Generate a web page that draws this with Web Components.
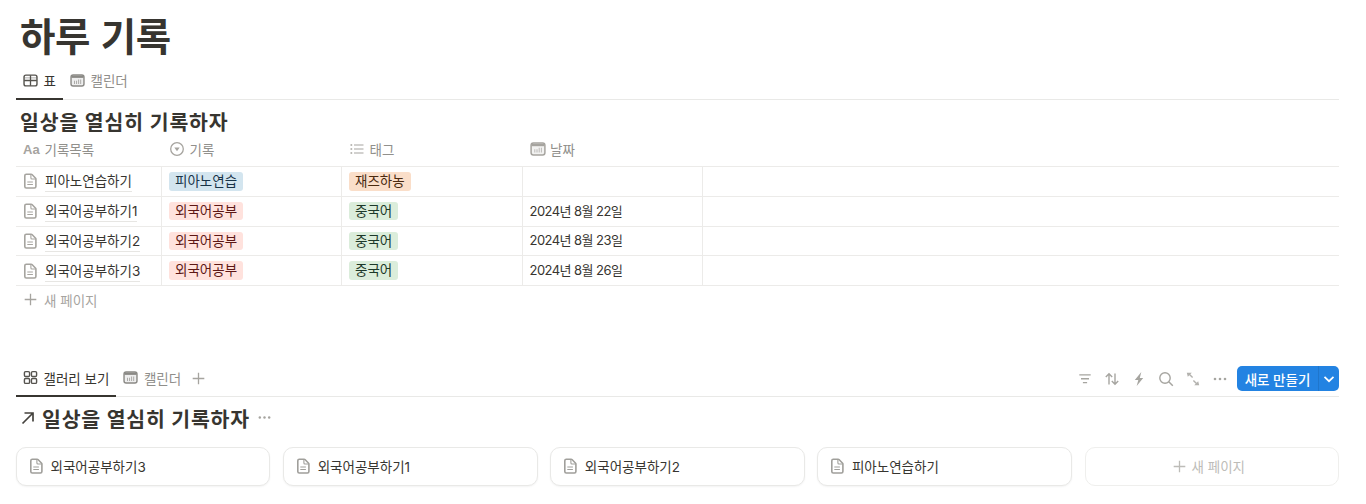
<!DOCTYPE html>
<html lang="ko"><head><meta charset="utf-8"><title>하루 기록</title>
<style>
html,body{margin:0;background:#fff;overflow:hidden}
body{font-family:Inter,"Noto Sans CJK KR","Noto Sans",sans-serif;color:#373530;width:1366px;height:504px}
</style></head><body>
<n-page>
  <n-title>하루 기록</n-title>
  <n-tabs style="--h:33px;--pb:5px">
    <n-tab icon="table" active style="--w:47px">표</n-tab>
    <n-tab icon="calendar">캘린더</n-tab>
  </n-tabs>
  <n-heading>일상을 열심히 기록하자</n-heading>
  <n-table>
    <n-row head>
      <n-cell head><n-aa slot="icon">Aa</n-aa>기록목록</n-cell>
      <n-cell head><n-icon slot="icon" name="select"></n-icon>기록</n-cell>
      <n-cell head><n-icon slot="icon" name="list"></n-icon>태그</n-cell>
      <n-cell head><n-icon slot="icon" name="calendar"></n-icon>날짜</n-cell>
      <n-cell filler></n-cell>
    </n-row>
    <n-row>
      <n-cell title><n-icon slot="icon" name="doc"></n-icon><n-link>피아노연습하기</n-link></n-cell>
      <n-cell><n-tag color="blue">피아노연습</n-tag></n-cell>
      <n-cell><n-tag color="orange">재즈하농</n-tag></n-cell>
      <n-cell></n-cell>
      <n-cell filler></n-cell>
    </n-row>
    <n-row>
      <n-cell title><n-icon slot="icon" name="doc"></n-icon><n-link>외국어공부하기1</n-link></n-cell>
      <n-cell><n-tag color="red">외국어공부</n-tag></n-cell>
      <n-cell><n-tag color="green">중국어</n-tag></n-cell>
      <n-cell date>2024년 8월 22일</n-cell>
      <n-cell filler></n-cell>
    </n-row>
    <n-row>
      <n-cell title><n-icon slot="icon" name="doc"></n-icon><n-link>외국어공부하기2</n-link></n-cell>
      <n-cell><n-tag color="red">외국어공부</n-tag></n-cell>
      <n-cell><n-tag color="green">중국어</n-tag></n-cell>
      <n-cell date>2024년 8월 23일</n-cell>
      <n-cell filler></n-cell>
    </n-row>
    <n-row>
      <n-cell title><n-icon slot="icon" name="doc"></n-icon><n-link>외국어공부하기3</n-link></n-cell>
      <n-cell><n-tag color="red">외국어공부</n-tag></n-cell>
      <n-cell><n-tag color="green">중국어</n-tag></n-cell>
      <n-cell date>2024년 8월 26일</n-cell>
      <n-cell filler></n-cell>
    </n-row>
  </n-table>
  <n-addrow>새 페이지</n-addrow>
  <n-tabs style="--h:35px;--pb:2px;margin-top:46px">
    <n-tab icon="gallery" active style="--w:100px">갤러리 보기</n-tab>
    <n-tab icon="calendar">캘린더</n-tab>
    <n-icon name="plus" style="--s:15px;margin-left:3px;color:#a6a49f"></n-icon>
    <n-toolbar slot="end"></n-toolbar>
  </n-tabs>
  <n-heading linked>일상을 열심히 기록하자</n-heading>
  <n-gallery>
    <n-card>외국어공부하기3</n-card>
    <n-card>외국어공부하기1</n-card>
    <n-card>외국어공부하기2</n-card>
    <n-card>피아노연습하기</n-card>
    <n-card add>새 페이지</n-card>
  </n-gallery>
</n-page>
<script>
const ICONS={
 doc:'<g fill="none" stroke="currentColor" stroke-linejoin="round"><path stroke-width="1.600" d="M4.300 1.200h4.900c.3 0 .6.100.8.300l3.600 3.700c.2.200.3.500.3.800v7.500c0 .9-.6 1.500-1.500 1.500H4.300c-.9 0-1.500-.6-1.500-1.500V2.700c0-.9.600-1.500 1.500-1.500z"/><path stroke-width="1.100" d="M8.900 1.500v3.500c0 .6.400 1 1 1h3.500M5.300 9h5.600M5.300 11.500h5.600"/></g>',
 table:'<g fill="none" stroke="currentColor"><rect x="1.100" y="2.300" width="13.800" height="11.400" rx="2" stroke-width="1.500"/><path stroke-width="1.400" d="M1.200 8h13.600M8 2.400v11.200"/><path stroke-width="1.100" d="M1.200 5.200h13.600" opacity=".45"/></g>',
 calendar:'<rect x="1.100" y="2.100" width="13.800" height="11.800" rx="2.200" fill="currentColor" opacity=".14"/><rect x="1.100" y="2.100" width="13.800" height="11.800" rx="2.200" fill="none" stroke="currentColor" stroke-width="1.500"/><path fill="currentColor" d="M1.500 2.800h13v2.400h-13z"/><path fill="currentColor" opacity=".7" d="M8.700 6.800h1v4.800h-1zM10.900 6.800h1v4.800h-1zM6.500 8.300h1v3.300h-1zM4.300 8.300h1v3.300h-1z"/>',
 select:'<circle cx="8" cy="8" r="6.300" fill="none" stroke="currentColor" stroke-width="1.300"/><path fill="currentColor" d="M5.300 6.400h5.400L8 10.200z"/>',
 list:'<path fill="currentColor" d="M1.500 3.200h1.700v1.500H1.500zM1.500 7.200h1.700v1.500H1.500zM1.500 11.200h1.700v1.500H1.500zM5 3.400h9.500v1.100H5zM5 7.400h9.500v1.100H5zM5 11.400h9.500v1.100H5z"/>',
 gallery:'<g fill="none" stroke="currentColor" stroke-width="1.500"><rect x="1.500" y="1.700" width="5.500" height="5.300" rx="1.300"/><rect x="9" y="1.700" width="5.500" height="5.300" rx="1.300"/><rect x="1.500" y="9" width="5.500" height="5.300" rx="1.300"/><rect x="9" y="9" width="5.500" height="5.300" rx="1.300"/></g>',
 plus:'<path fill="currentColor" d="M7.300 1.800h1.400v5.500h5.500v1.400H8.700v5.500H7.300V8.700H1.800V7.300h5.500z"/>',
 filter:'<path fill="currentColor" d="M2.300 3.300h11.400v1.300H2.300zM4 7.100h8v1.300H4zM5.900 10.900h4.200v1.300H5.900z"/>',
 sort:'<path fill="none" stroke="currentColor" stroke-width="1.400" d="M5 13.500V3M1.800 6 5 2.700 8.200 6M11 2.500V13M7.800 10 11 13.300 14.200 10"/>',
 bolt:'<path fill="currentColor" d="M10.300 1 3.800 9h3.500l-1.600 6 6.500-8H8.800z"/>',
 search:'<circle cx="7" cy="7" r="5.200" fill="none" stroke="currentColor" stroke-width="1.400"/><path stroke="currentColor" stroke-width="1.500" d="m10.800 10.800 4 4"/>',
 expand:'<path fill="currentColor" opacity=".85" d="M1.800 1.800h5L5.300 3.300l2.800 2.800-1 1-2.800-2.800-1.500 1.500zM14.200 14.200h-5l1.500-1.500-2.800-2.800 1-1 2.800 2.800 1.500-1.500z"/>',
 dots:'<circle cx="3" cy="8" r="1.300" fill="currentColor"/><circle cx="8" cy="8" r="1.300" fill="currentColor"/><circle cx="13" cy="8" r="1.300" fill="currentColor"/>',
 chevron:'<path fill="none" stroke="currentColor" stroke-width="1.700" d="M3.500 5.800 8 10.200l4.500-4.400"/>',
 arrow:'<path fill="none" stroke="currentColor" stroke-width="1.700" d="M2.500 13.500 13 3M4.500 3H13v8.500"/>'
};
function def(name,css,html,extra){
  customElements.define(name,class extends HTMLElement{
    constructor(){super();const r=this.attachShadow({mode:'open'});
      r.innerHTML='<style>'+css+'</style>'+(typeof html==='function'?html(this):html);}
    connectedCallback(){extra&&extra(this)}
  });
}
def('n-icon',':host{display:inline-flex;width:var(--s,16px);height:var(--s,16px);flex:none}svg{width:100%;height:100%;display:block}','',el=>{
  el.shadowRoot.innerHTML=el.shadowRoot.querySelector('style').outerHTML+'<svg viewBox="0 0 16 16" aria-hidden="true">'+(ICONS[el.getAttribute('name')]||'')+'</svg>';
});
def('n-page',':host{display:block;padding:0 27px 0 16px;width:1323px}','<slot></slot>');
def('n-title',':host{display:block;height:66px;padding-left:4px;font-size:38.500px;line-height:75px;font-weight:700;letter-spacing:-.4px;word-spacing:2px;color:#373530}','<slot></slot>');
def('n-tabs',':host{display:flex;align-items:center;height:var(--h);border-bottom:1px solid #e9e9e7}.l{display:flex;align-items:center;height:100%}.e{margin-left:auto}','<div class="l"><slot></slot></div><div class="e"><slot name="end"></slot></div>');
def('n-tab',`:host{display:flex;align-items:center;height:100%;position:relative;box-sizing:border-box;padding:0 7px var(--pb,0);gap:5.500px;font-size:13.500px;color:#8f8e8a;min-width:var(--w,auto)}
:host([active]){color:#373530}
:host([active])::after{content:"";position:absolute;left:0;right:0;bottom:-1px;height:2px;background:#373530}
.i{display:flex;--s:15px;color:#8a8985}:host([active]) .i{color:#55534e}`,
 el=>`<span class="i"><n-icon name="${el.getAttribute('icon')}"></n-icon></span><slot></slot>`);
def('n-heading',`:host{display:flex;align-items:center;font-weight:700;font-size:20.500px;letter-spacing:.85px;height:37px;padding:4px 0 0 4px;box-sizing:border-box;color:#373530;gap:6px}
:host([linked]){height:46px;padding:0 0 5px 4px;letter-spacing:.8px}
.d{display:none;color:#a6a49f;--s:15px;margin-left:1px}.a{display:none;--s:16px;color:#45433e}
:host([linked]) .d,:host([linked]) .a{display:flex}`,
 '<span class="a"><n-icon name="arrow"></n-icon></span><slot></slot><span class="d"><n-icon name="dots"></n-icon></span>');
def('n-table',':host{display:block}','<slot></slot>');
def('n-row',`:host{display:grid;grid-template-columns:146px 180px 180.500px 180px 1fr;height:28.750px;border-bottom:1px solid #ecebe9;align-items:stretch}
:host([head]){height:29px}`,'<slot></slot>');
def('n-cell',`:host{display:flex;align-items:center;border-right:1px solid #ecebe9;font-size:13.500px;color:#373530;padding-left:7px;gap:5px;min-width:0}
:host([head]){color:#91908c;border-right:0;padding:0 0 5px 7px;gap:4.500px}
:host([title]){padding-left:6px;gap:7px}
:host([filler]){border-right:0}
:host([date]){letter-spacing:-.55px;font-size:13px;padding-bottom:2px}
::slotted([slot=icon]){color:#a6a49f}`,'<slot name="icon"></slot><slot></slot>');
def('n-aa',':host{display:inline-block;font:700 13px "Liberation Sans",sans-serif;color:#a6a49f;width:17px}','<slot></slot>');
def('n-link',':host{border-bottom:1px solid #e7e6e3;line-height:19px;color:#373530;position:relative;top:1px}','<slot></slot>');
def('n-tag',`:host{display:inline-block;height:18.500px;line-height:18px;padding:0 6px;border-radius:3px;font-size:13.500px;color:#373530}
:host([color=blue]){background:#d3e5ef;color:#183347}
:host([color=red]){background:#ffe2dd;color:#5d1715}
:host([color=orange]){background:#fadec9;color:#49290e}
:host([color=green]){background:#dbeddb;color:#1c3829}`,'<slot></slot>');
def('n-addrow',`:host{display:flex;align-items:center;height:29px;padding:0 0 2px 7px;box-sizing:border-box;gap:6px;font-size:13.500px;color:#a6a49f}
.i{display:flex;--s:15px}`,'<span class="i"><n-icon name="plus"></n-icon></span><slot></slot>');
def('n-toolbar',`:host{display:flex;align-items:center;gap:11px;color:#a6a5a0}
n-icon{--s:16px}
.b{display:flex;align-items:center;height:25px;width:102px;margin-left:-2px;border-radius:5px;background:#2383e2;color:#fff;font-size:13.500px;font-weight:500}
.t{flex:1;text-align:center}
.c{display:flex;align-items:center;justify-content:center;width:21px;height:100%;border-left:1px solid #1f76cc;box-sizing:border-box;--s:10px;color:#fff}`,
 `<n-icon name="filter"></n-icon><n-icon name="sort"></n-icon><n-icon name="bolt"></n-icon><n-icon name="search"></n-icon><n-icon name="expand"></n-icon><n-icon name="dots"></n-icon>
 <div class="b"><span class="t">새로 만들기</span><span class="c"><n-icon name="chevron"></n-icon></span></div>`);
def('n-gallery',':host{display:grid;grid-template-columns:repeat(5,1fr);gap:12.750px;margin-top:4px}','<slot></slot>');
def('n-card',`:host{display:flex;align-items:center;height:39px;box-sizing:border-box;border:1px solid #e9e9e7;border-radius:10px;background:#fff;padding:0 0 1px 11px;gap:6.500px;font-size:13.500px;color:#373530;box-shadow:0 1px 2px rgba(15,15,15,.05)}
:host([add]){justify-content:center;padding:0 7px 1px 0;gap:5px;color:#bdbcb8;box-shadow:none;border-color:#efefed}
.i{display:flex;--s:16px;color:#a09f9b}:host([add]) .i{color:#bdbcb8;--s:15px}`,
 el=>`<span class="i"><n-icon name="${el.hasAttribute('add')?'plus':'doc'}"></n-icon></span><slot></slot>`);
</script>
</body></html>
